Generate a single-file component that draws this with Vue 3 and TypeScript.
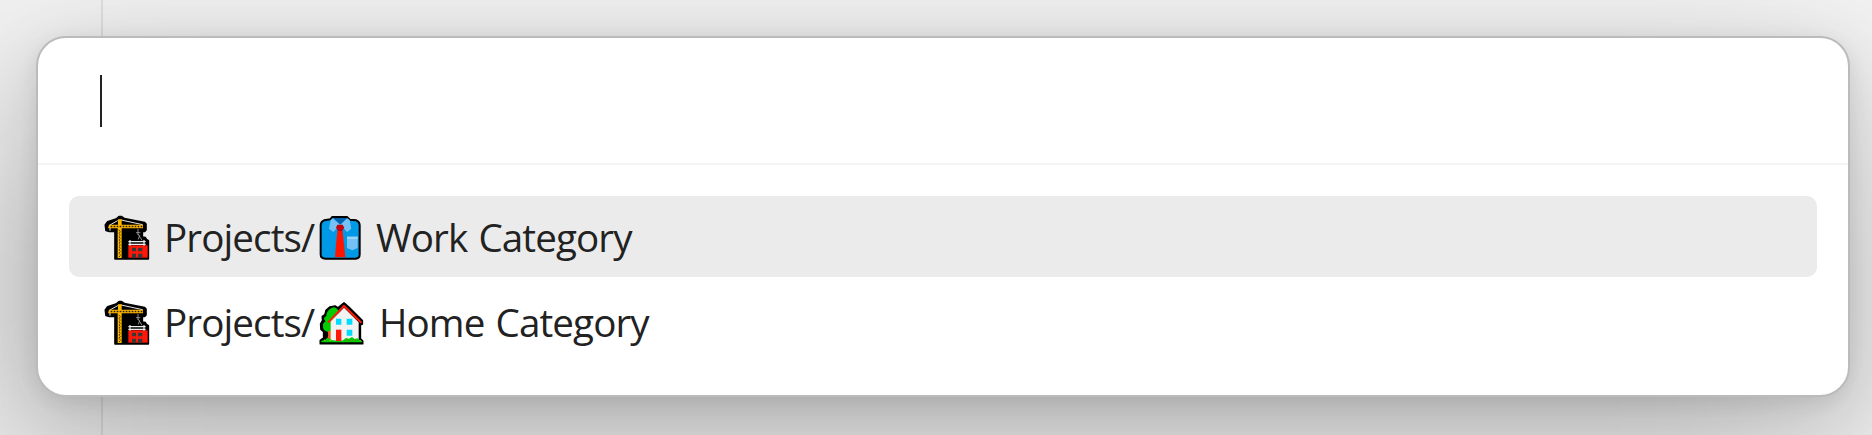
<script setup lang="ts">
import { ref } from 'vue'

interface Suggestion {
  folder: string
  name: string
  icon: 'shirt' | 'house'
}

const suggestions: Suggestion[] = [
  { folder: 'Projects/', name: 'Work Category', icon: 'shirt' },
  { folder: 'Projects/', name: 'Home Category', icon: 'house' },
]
const selected = ref(0)
</script>

<template>
  <div class="workspace">
    <div class="sidebar"></div>
    <div class="ambient"></div>
    <div class="prompt">
      <div class="prompt-input"><span class="caret"></span></div>
      <div class="results">
        <div
          v-for="(item, i) in suggestions"
          :key="item.name"
          class="row"
          :class="{ selected: i === selected }"
          @mouseenter="selected = i"
        >
          <svg class="icon" viewBox="27 31 138 138">
            <path d="M31 61L38 51L65 42L72 36L80 36L88 42L149 54L153 58V76L149 80H142V97L151 99L154 104L160 108V163H60V80H43L33 77Z" fill="#000" stroke="#000" stroke-width="5" stroke-linejoin="round" />
            <path d="M43 62L68 48L78 46L143 60M75 47V60M45 67V78" fill="none" stroke="#e4e4e4" stroke-width="3" />
            <path d="M69 44H80V60H144V71H80V160H68V71H39L42 60H69Z" fill="#fdb900" />
            <path d="M47 65.500H142" stroke="#291d00" stroke-width="4" stroke-dasharray="5 4" />
            <path d="M71 76L77 81L71 86L77 91L71 96L77 101L71 106L77 111L71 116L77 121L71 126L77 131L71 136L77 141L71 146L77 151L72 157" fill="none" stroke="#332500" stroke-width="3" stroke-dasharray="5 3" />
            <path d="M129 73V91M123 84H136M129 88L141 107M134 92L130 104" fill="none" stroke="#a6a6a6" stroke-width="2.500" />
            <path d="M100 122H158V159H100Z" fill="#ff1707" />
            <path d="M100 111H152M100 119H152M105 106V123M147 106V123" fill="none" stroke="#ededed" stroke-width="3.500" />
            <path d="M111 129H123V140H111ZM129 129H142V140H129ZM111 147H123V159H111ZM129 147H142V159H129Z" fill="#383838" />
          </svg>
          <span class="folder">{{ item.folder }}</span>
          <svg v-if="item.icon === 'shirt'" class="icon" viewBox="27 31 138 138">
            <path d="M67 37H111L119 45L139 47Q149 51 149 62V149Q149 162 137 162H46Q32 162 32 149V62Q32 51 42 47L61 44Z" fill="#0099e6" stroke="#000" stroke-width="6" stroke-linejoin="round" />
            <path d="M70 40H110L91 61Z" fill="#0063b1" />
            <path d="M68 41L91 60L70 82L57 72L62 46ZM112 41L91 60L111 82L124 72L119 46Z" fill="#75c1f3" />
            <path d="M83 75H97L101 108L106 158H75L79 108Z" fill="#ff1500" />
            <path d="M82 60H98L103 69L96 79H85L78 69Z" fill="#c4000d" />
            <path d="M111 96H143V130L127 137L111 130Z" fill="#75c1f3" />
            <path d="M111 96H143V103H111Z" fill="#9bd4f8" />
          </svg>
          <svg v-else class="icon" viewBox="27 31 138 138">
            <path d="M102 40L118 54L157 93V103L151 106V147L158 154V162H31V152L41 145V126L33 119L32 103L38 92L37 80L45 75L48 62L60 52L75 49L84 55Z" fill="#000" stroke="#000" stroke-width="5" stroke-linejoin="round" />
            <path d="M61 57Q72 48 81 57L88 66L68 95V127H54Q37 122 39 109Q37 101 47 95Q36 86 49 79Q49 66 61 57Z" fill="#0c0" />
            <path d="M54 124H64V151H51Q56 138 54 124Z" fill="#f15a16" />
            <path d="M102 54L146 98V153H62V95Z" fill="#f2f2f2" />
            <path d="M54 99L102 49L154 99" fill="none" stroke="#ff1b09" stroke-width="6" />
            <path d="M78 87H94V105H78ZM110 87H127V105H110ZM110 120H127V138H110Z" fill="#00dcff" />
            <path d="M34 158V153L47 150L51 144L61 148L66 152L78 154H96L108 145L117 147L126 142L134 148L143 146L149 152L156 154V158Z" fill="#0c0" />
            <path d="M78 120H94V154H78Z" fill="#ff1707" />
            <path d="M43 151h3M59 152h3M149 152h3" stroke="#ffdf00" stroke-width="3" />
            <path d="M111 151h3M122 153h3M135 151h3" stroke="#e94313" stroke-width="3" />
          </svg>
          <span class="name" :class="item.icon">{{ item.name }}</span>
        </div>
      </div>
    </div>
  </div>
</template>

<style>
body {
  margin: 0;
  overflow: hidden;
}
</style>

<style scoped>
.workspace {
  position: relative;
  box-sizing: border-box;
  height: 435px;
  padding: 36px 22px 0 36px;
  overflow: hidden;
  background: #f4f4f4;
}
.sidebar {
  position: absolute;
  top: 0;
  bottom: 0;
  left: 0;
  width: 101px;
  border-right: 2px solid #e0e0e0;
  background: #f4f4f4;
}
.ambient {
  position: absolute;
  top: 108px;
  right: 16px;
  left: -30px;
  height: 367px;
  border-radius: 30px;
  background: rgba(0, 0, 0, 0.22);
  filter: blur(110px);
}
.prompt {
  position: relative;
  box-sizing: border-box;
  height: 361px;
  border: 2px solid #bbb;
  border-radius: 30px;
  background: #fff;
  box-shadow:
    0 5px 19px rgba(0, 0, 0, 0.071),
    0 16px 64px rgba(0, 0, 0, 0.112);
}
.prompt-input {
  display: flex;
  align-items: center;
  height: 125px;
  padding-left: 62px;
  border-bottom: 2px solid #f4f4f4;
}
.caret {
  width: 2px;
  height: 52px;
  background: #222;
}
.results {
  display: flex;
  flex-direction: column;
  gap: 4px;
  padding: 31px;
}
.row {
  display: flex;
  align-items: center;
  height: 81px;
  padding-left: 35px;
  border-radius: 10px;
  color: #222;
  font-family: "Open Sans", "Noto Sans", sans-serif;
  font-size: 38.6px;
  font-weight: 370;
  line-height: 81px;
  white-space: nowrap;
}
.row.selected {
  background: #ebebeb;
}
.icon {
  flex: none;
  width: 46px;
  height: 46px;
  margin-top: 3px;
}
.folder {
  box-sizing: border-box;
  flex: none;
  width: 169px;
  padding-top: 2px;
  padding-left: 14px;
  letter-spacing: -0.9px;
}
.name {
  padding-top: 2px;
  letter-spacing: -0.9px;
  word-spacing: 2px;
}
.name.shirt {
  margin-left: 11px;
}
.name.house {
  margin-left: 14px;
}
</style>
